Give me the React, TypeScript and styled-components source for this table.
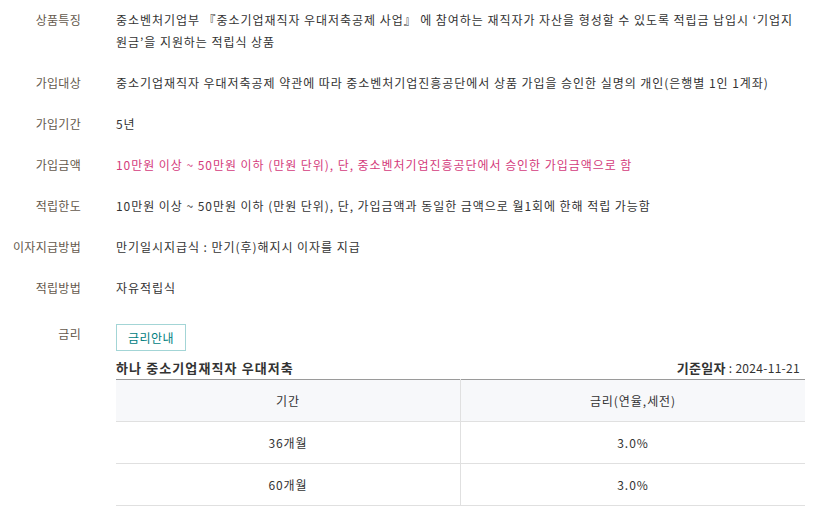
import React from 'react';
import styled, { createGlobalStyle } from 'styled-components';

const GlobalStyle = createGlobalStyle`
  body {
    margin: 0;
    background: #fff;
    font-family: "Noto Sans CJK KR", "Noto Sans", sans-serif;
    font-size: 12px;
    color: #333;
    letter-spacing: 0.95px;
  }
`;

const Page = styled.div`
  width: 805px;
`;

const InfoList = styled.dl`
  margin: 0;
  display: grid;
  grid-template-columns: 81px 1fr;
  column-gap: 35px;
`;

const Term = styled.dt<{ $top?: number }>`
  margin: 0;
  padding: ${(p) => p.$top ?? 9}px 0 10px;
  text-align: right;
  color: #65594d;
  line-height: 22px;
  white-space: nowrap;
  letter-spacing: 0.3px;
`;

const Desc = styled.dd<{ $top?: number; $accent?: boolean }>`
  margin: 0;
  padding: ${(p) => p.$top ?? 9}px 0 10px;
  line-height: 22px;
  color: ${(p) => (p.$accent ? '#d43b7c' : '#333')};
`;

const RateButton = styled.button`
  margin-top: 1px;
  width: 70px;
  height: 27px;
  padding: 0;
  border: 1px solid #a3d5d6;
  background: #fff;
  color: #00807f;
  font-family: inherit;
  font-size: 12px;
  letter-spacing: 0.4px;
  cursor: pointer;
`;

const TableHead = styled.div`
  margin-top: 8px;
  display: flex;
  justify-content: space-between;
  align-items: center;
  height: 18px;
  padding-right: 5px;
`;

const TableTitle = styled.strong`
  font-size: 13px;
  color: #333;
  letter-spacing: 1.1px;
`;

const BaseDate = styled.span`
  font-size: 12px;
  color: #333;
  letter-spacing: 0.3px;

  b {
    font-size: 13px;
  }
`;

const RateTable = styled.table`
  margin-top: 2px;
  width: 100%;
  border-collapse: collapse;
  border-top: 1px solid #9a9a9a;
  table-layout: fixed;
`;

const Cell = styled.td<{ $head?: boolean }>`
  height: 41px;
  padding: 0;
  text-align: center;
  font-size: 12px;
  font-weight: normal;
  color: #333;
  background: ${(p) => (p.$head ? '#f7f8fa' : '#fff')};
  border-bottom: 1px solid #e0e0e0;

  & + & {
    border-left: 1px solid #e0e0e0;
  }
`;

const items: { term: string; desc: React.ReactNode; accent?: boolean }[] = [
  {
    term: '상품특징',
    desc: (
      <>
        중소벤처기업부 『중소기업재직자 우대저축공제 사업』 에 참여하는 재직자가 자산을 형성할 수 있도록 적립금 납입시 ‘기업지
        <br />
        원금’을 지원하는 적립식 상품
      </>
    ),
  },
  {
    term: '가입대상',
    desc: '중소기업재직자 우대저축공제 약관에 따라 중소벤처기업진흥공단에서 상품 가입을 승인한 실명의 개인(은행별 1인 1계좌)',
  },
  { term: '가입기간', desc: '5년' },
  {
    term: '가입금액',
    desc: '10만원 이상 ~ 50만원 이하 (만원 단위), 단, 중소벤처기업진흥공단에서 승인한 가입금액으로 함',
    accent: true,
  },
  {
    term: '적립한도',
    desc: '10만원 이상 ~ 50만원 이하 (만원 단위), 단, 가입금액과 동일한 금액으로 월1회에 한해 적립 가능함',
  },
  { term: '이자지급방법', desc: '만기일시지급식 : 만기(후)해지시 이자를 지급' },
  { term: '적립방법', desc: '자유적립식' },
];

const rates = [
  { period: '36개월', rate: '3.0%' },
  { period: '60개월', rate: '3.0%' },
];

export default function App() {
  return (
    <Page>
      <GlobalStyle />
      <InfoList>
        {items.map((item) => (
          <React.Fragment key={item.term}>
            <Term>{item.term}</Term>
            <Desc $accent={item.accent}>{item.desc}</Desc>
          </React.Fragment>
        ))}
        <Term $top={14}>금리</Term>
        <Desc $top={14}>
          <RateButton type="button">금리안내</RateButton>
          <TableHead>
            <TableTitle>하나 중소기업재직자 우대저축</TableTitle>
            <BaseDate>
              <b>기준일자</b> : 2024-11-21
            </BaseDate>
          </TableHead>
          <RateTable>
            <thead>
              <tr>
                <Cell as="th" $head>기간</Cell>
                <Cell as="th" $head>금리(연율,세전)</Cell>
              </tr>
            </thead>
            <tbody>
              {rates.map((r) => (
                <tr key={r.period}>
                  <Cell>{r.period}</Cell>
                  <Cell>{r.rate}</Cell>
                </tr>
              ))}
            </tbody>
          </RateTable>
        </Desc>
      </InfoList>
    </Page>
  );
}
